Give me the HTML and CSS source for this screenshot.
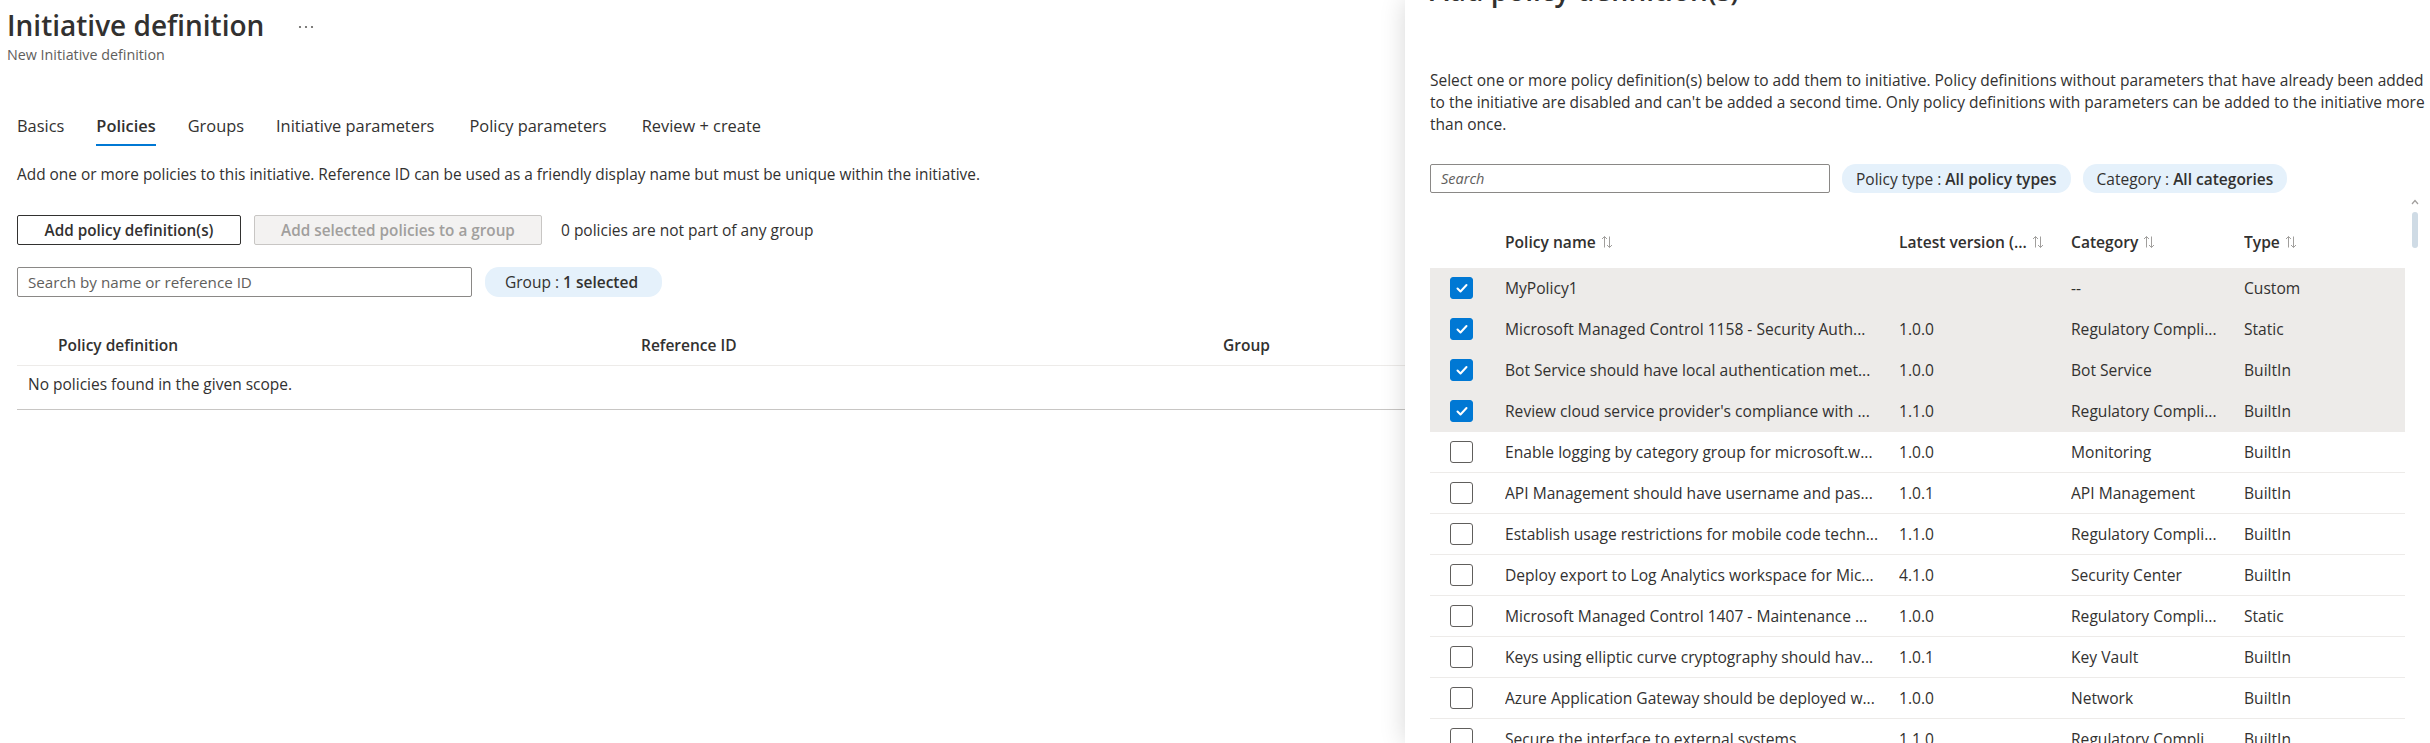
FILE: index.html
```html
<!DOCTYPE html>
<html lang="en">
<head>
<meta charset="utf-8">
<title>Initiative definition</title>
<link rel="stylesheet" href="styles.css">
</head>
<body>
<main class="page">
  <div class="page-head">
    <h1 class="title">Initiative definition</h1>
    <svg class="more" width="16" height="4" viewBox="0 0 16 4"><circle cx="2" cy="2" r="1.1"/><circle cx="8" cy="2" r="1.1"/><circle cx="14" cy="2" r="1.1"/></svg>
  </div>
  <div class="subtitle">New Initiative definition</div>

  <nav class="tabs">
    <span class="tab">Basics</span>
    <span class="tab active">Policies</span>
    <span class="tab">Groups</span>
    <span class="tab">Initiative parameters</span>
    <span class="tab">Policy parameters</span>
    <span class="tab">Review + create</span>
  </nav>

  <p class="desc">Add one or more policies to this initiative. Reference ID can be used as a friendly display name but must be unique within the initiative.</p>

  <div class="actions">
    <button class="btn">Add policy definition(s)</button>
    <button class="btn disabled">Add selected policies to a group</button>
    <span class="note">0 policies are not part of any group</span>
  </div>

  <div class="filters">
    <div class="search left-search">Search by name or reference ID</div>
    <div class="pill group-pill">Group : <b>1 selected</b></div>
  </div>

  <div class="ltable">
    <div class="lrow lhead">
      <div class="lcell">Policy definition</div>
      <div class="lcell">Reference ID</div>
      <div class="lcell">Group</div>
    </div>
    <div class="lempty">No policies found in the given scope.</div>
  </div>
</main>

<aside class="panel">
  <h2 class="panel-title">Add policy definition(s)</h2>
  <p class="panel-desc">Select one or more policy definition(s) below to add them to initiative. Policy definitions without parameters that have already been added to the initiative are disabled and can't be added a second time. Only policy definitions with parameters can be added to the initiative more than once.</p>

  <div class="filters panel-filters">
    <div class="search panel-search">Search</div>
    <div class="pill">Policy type : <b>All policy types</b></div>
    <div class="pill">Category : <b>All categories</b></div>
  </div>

  <div class="ptable">
    <div class="prow phead">
      <div class="pcell"></div>
      <div class="pcell">Policy name <svg class="sort" width="12" height="14" viewBox="0 0 12 14"><path d="M3.5 12.5V1.5M1 4l2.5-2.5L6 4M8.5 1.5v11M6 10l2.5 2.5L11 10"/></svg></div>
      <div class="pcell">Latest version (... <svg class="sort" width="12" height="14" viewBox="0 0 12 14"><path d="M3.5 12.5V1.5M1 4l2.5-2.5L6 4M8.5 1.5v11M6 10l2.5 2.5L11 10"/></svg></div>
      <div class="pcell">Category <svg class="sort" width="12" height="14" viewBox="0 0 12 14"><path d="M3.5 12.5V1.5M1 4l2.5-2.5L6 4M8.5 1.5v11M6 10l2.5 2.5L11 10"/></svg></div>
      <div class="pcell">Type <svg class="sort" width="12" height="14" viewBox="0 0 12 14"><path d="M3.5 12.5V1.5M1 4l2.5-2.5L6 4M8.5 1.5v11M6 10l2.5 2.5L11 10"/></svg></div>
    </div>

    <div class="prow selected">
      <div class="pcell"><span class="cb checked"><svg width="22" height="22" viewBox="0 0 22 22"><path d="M6.5 11.5l3 3 6-6.5"/></svg></span></div>
      <div class="pcell name">MyPolicy1</div>
      <div class="pcell"></div>
      <div class="pcell">--</div>
      <div class="pcell">Custom</div>
    </div>
    <div class="prow selected">
      <div class="pcell"><span class="cb checked"><svg width="22" height="22" viewBox="0 0 22 22"><path d="M6.5 11.5l3 3 6-6.5"/></svg></span></div>
      <div class="pcell name">Microsoft Managed Control 1158 - Security Auth...</div>
      <div class="pcell">1.0.0</div>
      <div class="pcell">Regulatory Compli...</div>
      <div class="pcell">Static</div>
    </div>
    <div class="prow selected">
      <div class="pcell"><span class="cb checked"><svg width="22" height="22" viewBox="0 0 22 22"><path d="M6.5 11.5l3 3 6-6.5"/></svg></span></div>
      <div class="pcell name">Bot Service should have local authentication met...</div>
      <div class="pcell">1.0.0</div>
      <div class="pcell">Bot Service</div>
      <div class="pcell">BuiltIn</div>
    </div>
    <div class="prow selected">
      <div class="pcell"><span class="cb checked"><svg width="22" height="22" viewBox="0 0 22 22"><path d="M6.5 11.5l3 3 6-6.5"/></svg></span></div>
      <div class="pcell name">Review cloud service provider's compliance with ...</div>
      <div class="pcell">1.1.0</div>
      <div class="pcell">Regulatory Compli...</div>
      <div class="pcell">BuiltIn</div>
    </div>
    <div class="prow">
      <div class="pcell"><span class="cb"></span></div>
      <div class="pcell name">Enable logging by category group for microsoft.w...</div>
      <div class="pcell">1.0.0</div>
      <div class="pcell">Monitoring</div>
      <div class="pcell">BuiltIn</div>
    </div>
    <div class="prow">
      <div class="pcell"><span class="cb"></span></div>
      <div class="pcell name">API Management should have username and pas...</div>
      <div class="pcell">1.0.1</div>
      <div class="pcell">API Management</div>
      <div class="pcell">BuiltIn</div>
    </div>
    <div class="prow">
      <div class="pcell"><span class="cb"></span></div>
      <div class="pcell name">Establish usage restrictions for mobile code techn...</div>
      <div class="pcell">1.1.0</div>
      <div class="pcell">Regulatory Compli...</div>
      <div class="pcell">BuiltIn</div>
    </div>
    <div class="prow">
      <div class="pcell"><span class="cb"></span></div>
      <div class="pcell name">Deploy export to Log Analytics workspace for Mic...</div>
      <div class="pcell">4.1.0</div>
      <div class="pcell">Security Center</div>
      <div class="pcell">BuiltIn</div>
    </div>
    <div class="prow">
      <div class="pcell"><span class="cb"></span></div>
      <div class="pcell name">Microsoft Managed Control 1407 - Maintenance ...</div>
      <div class="pcell">1.0.0</div>
      <div class="pcell">Regulatory Compli...</div>
      <div class="pcell">Static</div>
    </div>
    <div class="prow">
      <div class="pcell"><span class="cb"></span></div>
      <div class="pcell name">Keys using elliptic curve cryptography should hav...</div>
      <div class="pcell">1.0.1</div>
      <div class="pcell">Key Vault</div>
      <div class="pcell">BuiltIn</div>
    </div>
    <div class="prow">
      <div class="pcell"><span class="cb"></span></div>
      <div class="pcell name">Azure Application Gateway should be deployed w...</div>
      <div class="pcell">1.0.0</div>
      <div class="pcell">Network</div>
      <div class="pcell">BuiltIn</div>
    </div>
    <div class="prow">
      <div class="pcell"><span class="cb"></span></div>
      <div class="pcell name">Secure the interface to external systems</div>
      <div class="pcell">1.1.0</div>
      <div class="pcell">Regulatory Compli...</div>
      <div class="pcell">BuiltIn</div>
    </div>
  </div>

  <div class="scrollbar">
    <svg class="scroll-up" width="8" height="6" viewBox="0 0 8 6"><path d="M1 5l3-3.5L7 5"/></svg>
    <div class="thumb"></div>
  </div>
</aside>
</body>
</html>
```

FILE: styles.css
```css
* { box-sizing: border-box; }

html, body {
  margin: 0;
  padding: 0;
  height: 743px;
  overflow: hidden;
  background: #ffffff;
}

body {
  font-family: "Open Sans", "Noto Sans", sans-serif;
  color: #323130;
  font-size: 15.5px;
}

.page {
  padding: 0 0 0 17px;
  width: 2430px;
}

.page-head {
  display: flex;
  align-items: center;
  margin-left: -10px;
  padding-top: 7px;
}

.title {
  margin: 0;
  font-size: 28px;
  line-height: 36px;
  font-weight: 600;
}

.more {
  fill: #605e5c;
  margin-left: 34px;
  margin-top: 4px;
}

.subtitle {
  margin-left: -10px;
  margin-top: 3px;
  font-size: 14.3px;
  line-height: 18px;
  color: #605e5c;
}

.tabs {
  display: flex;
  margin-top: 44px;
}

.tab {
  font-size: 16.4px;
  line-height: 20px;
  padding: 8px 0 8px;
  border-bottom: 2px solid transparent;
  margin-right: 32px;
}

.tab:nth-child(4),
.tab:nth-child(5) { margin-right: 35px; }

.tab.active {
  font-weight: 600;
  border-bottom-color: #0078d4;
}

.desc {
  margin: 19px 0 0;
  font-size: 15.4px;
  line-height: 20px;
}

.actions {
  display: flex;
  align-items: center;
  margin-top: 30px;
  gap: 13px;
}

.btn {
  font-family: inherit;
  font-size: 15.3px;
  font-weight: 600;
  height: 30px;
  padding: 0;
  background: #ffffff;
  border: 1px solid #323130;
  border-radius: 2px;
  color: #323130;
}

.btn:first-child { width: 224px; }

.btn.disabled {
  width: 288px;
  background: #f3f2f1;
  border-color: #c8c6c4;
  color: #a19f9d;
}

.note {
  font-size: 15.5px;
  margin-left: 6px;
}

.filters {
  display: flex;
  align-items: center;
  gap: 13px;
  margin-top: 22px;
}

.search {
  height: 30px;
  border: 1px solid #8a8886;
  border-radius: 2px;
  padding: 0 10px;
  display: flex;
  align-items: center;
  color: #605e5c;
  font-size: 15.2px;
}

.left-search { width: 455px; }

.pill {
  height: 30px;
  padding: 0 14px;
  border-radius: 14px;
  background: #e5f1fb;
  display: flex;
  align-items: center;
  font-size: 15.5px;
  white-space: pre;
}

.group-pill { padding: 0 24px 0 20px; }

.pill b { font-weight: 600; }

.ltable {
  margin-top: 28px;
  width: 2400px;
}

.lrow {
  display: grid;
  grid-template-columns: 583px 582px 1fr;
}

.lhead {
  height: 41px;
  align-items: center;
  border-bottom: 1px solid #edebe9;
  font-weight: 600;
}

.lcell { padding-left: 41px; }

.lempty {
  padding: 8px 0 15px 11px;
  line-height: 20px;
  border-bottom: 1px solid #c8c6c4;
}

/* Right panel overlay */
.panel {
  position: absolute;
  top: 0;
  left: 1405px;
  width: 1025px;
  height: 743px;
  background: #ffffff;
  box-shadow: 0 0 24px rgba(0, 0, 0, 0.16);
  padding-left: 25px;
  overflow: hidden;
}

.panel-title {
  margin: -28px 0 0;
  font-size: 28px;
  line-height: 36px;
  font-weight: 600;
}

.panel-desc {
  margin: 61px 0 0;
  width: 998px;
  font-size: 15.5px;
  line-height: 22px;
}

.panel-filters {
  margin-top: 29px;
  gap: 12px;
}

.panel-search {
  width: 400px;
  height: 29px;
  font-style: italic;
  font-size: 14.5px;
}

.panel-filters .pill { height: 29px; }

.ptable {
  margin-top: 23px;
  width: 975px;
}

.prow {
  display: grid;
  grid-template-columns: 75px 394px 172px 173px 1fr;
  height: 41px;
  align-items: center;
  border-bottom: 1px solid #edebe9;
  font-size: 15.6px;
}

.prow.phead {
  height: 52px;
  border-bottom: none;
  font-weight: 600;
}

.prow.selected { background: #edebe9; }

.pcell {
  white-space: nowrap;
  overflow: hidden;
  text-overflow: ellipsis;
  display: flex;
  align-items: center;
}

.pcell:first-child { padding-left: 20px; }

.sort {
  margin-left: 5px;
  fill: none;
  stroke: #a19f9d;
  stroke-width: 1;
  flex: none;
}

.cb {
  display: block;
  width: 23px;
  height: 22px;
  border: 1px solid #605e5c;
  border-radius: 3px;
  background: #ffffff;
}

.cb.checked {
  background: #0078d4;
  border-color: #0078d4;
}

.cb svg {
  display: block;
  margin: -1px 0 0 0;
  fill: none;
  stroke: #ffffff;
  stroke-width: 2;
  stroke-linecap: round;
  stroke-linejoin: round;
}

.scrollbar {
  position: absolute;
  left: 1006px;
  top: 199px;
  width: 8px;
  display: flex;
  flex-direction: column;
  align-items: center;
}

.scroll-up {
  fill: none;
  stroke: #a19f9d;
  stroke-width: 1.2;
}

.thumb {
  margin-top: 7px;
  width: 6px;
  height: 36px;
  border-radius: 3px;
  background: #cfdbe5;
}
```
